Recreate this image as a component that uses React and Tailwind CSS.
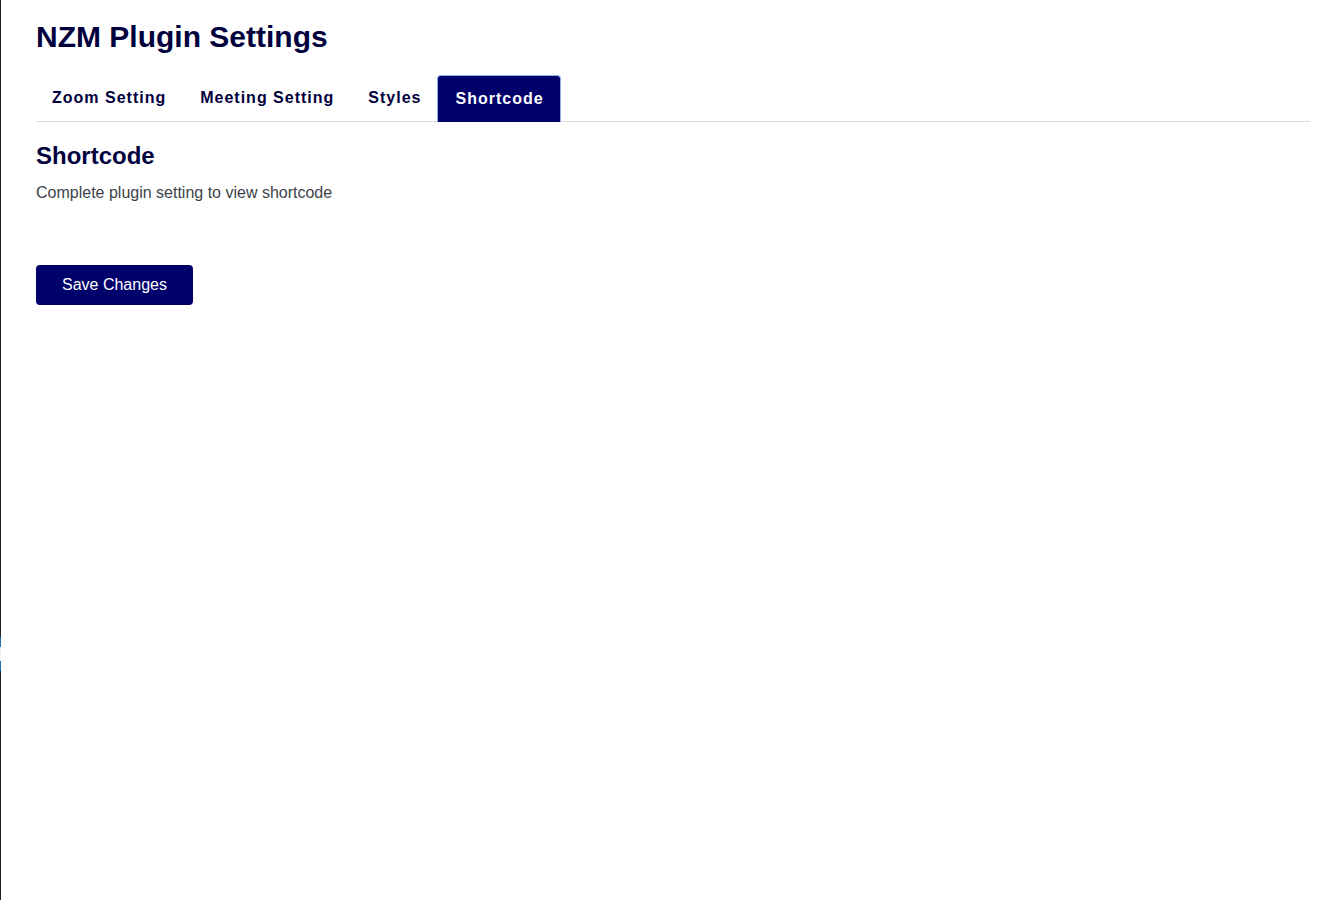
import React from 'react'

const TABS = ['Zoom Setting', 'Meeting Setting', 'Styles', 'Shortcode']

export default function App() {
  const active = 'Shortcode'
  return (
    <div className="flex min-h-[900px] bg-white" style={{ fontFamily: '"Liberation Sans", Arial, sans-serif' }}>
      {/* edge of the admin menu */}
      <div className="flex w-px shrink-0 flex-col">
        <div className="h-[637px] bg-[#1d2327]" />
        <div className="h-[10px] bg-[#2271b1]" />
        <div className="h-[14px] bg-[#f0f0f1]" />
        <div className="h-[10px] bg-[#2271b1]" />
        <div className="flex-1 bg-[#1d2327]" />
      </div>

      <div className="flex-1 pl-[35px] pr-[10px] pt-[18px]">
        <h1 className="text-[30px] font-bold leading-[38px] text-[#00003d]">NZM Plugin Settings</h1>

        <div className="mt-[19px] flex border-b border-[#dcdcde]">
          {TABS.map((t, i) => (
            <button
              key={t}
              className={
                (i === 0 ? 'ml-[-2px] ' : '') +
                (t === active
                  ? 'mb-[-1px] rounded-t-[4px] border border-b-0 border-[#8fb4e8] bg-[#00006b] pl-[17px] pr-[16px] pt-[13px] pb-[14px] text-[16px] font-bold leading-[18px] tracking-[1px] text-white'
                  : 'mb-[-1px] border border-transparent pl-[17px] pr-[15px] pt-[13px] pb-[14px] text-[16px] font-bold leading-[18px] tracking-[1px] text-[#00003d]')
              }
            >
              {t}
            </button>
          ))}
        </div>

        <h2 className="mt-[20px] text-[24px] font-bold leading-[28px] text-[#00003d]">Shortcode</h2>
        <p className="mt-[13px] text-[16px] leading-[20px] text-[#3c434a]">Complete plugin setting to view shortcode</p>

        <button className="mt-[62px] h-[40px] rounded-[4px] bg-[#00006b] px-[26px] text-[16px] leading-[20px] text-white">
          Save Changes
        </button>
      </div>
    </div>
  )
}
